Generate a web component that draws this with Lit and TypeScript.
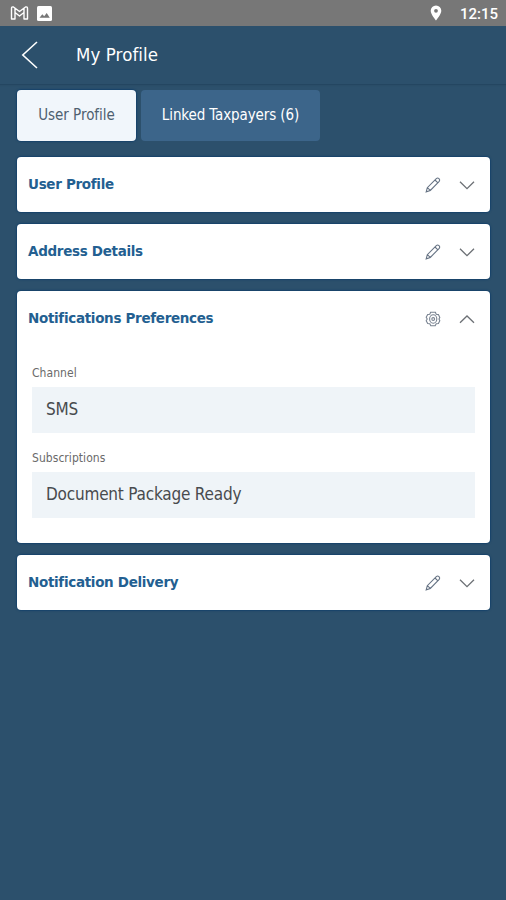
import { LitElement, html, svg, css } from "lit";
import { customElement, property } from "lit/decorators.js";

const pencil = svg`<path d="M2.2 15.8 L3.3 11.7 L12.3 2.6 Q13.6 1.5 15 2.6 Q16.3 4 15.2 5.4 L6.3 14.4 Z M3.3 11.7 L6.3 14.4 M11 4 L13.9 6.8"/>`;
const gear = svg`<path d="M6.6 2.2 H11.4 L12.2 4.2 L14.4 4.6 L15.8 7.4 L15 9 L15.8 10.8 L14.4 13.5 L12.2 13.8 L11.2 15.8 H6.8 L5.8 13.8 L3.7 13.5 L2.2 10.8 L3.2 9 L2.2 7.2 L3.7 4.5 L5.8 4.2 Z"/><ellipse cx="9.2" cy="9" rx="3.6" ry="4.2"/><circle cx="9.2" cy="9" r="1.4"/>`;

@customElement("profile-card")
export class ProfileCard extends LitElement {
  @property() heading = "";
  @property() action = "edit";
  @property({ type: Boolean }) open = false;

  static styles = css`
    :host { display: block; background: #fff; border-radius: 4px; box-shadow: 0 0 1.5px 1px #16426a; }
    .head { height: 55px; display: flex; align-items: center; padding: 0 15px 0 11px; box-sizing: border-box; }
    .title { flex: 1; color: #235f91; font: bold 13.5px/20px "DejaVu Sans", sans-serif; letter-spacing: -0.32px; white-space: nowrap; padding-bottom: 1px; }
    svg { fill: none; stroke: #667384; display: block; }
    .action { width: 18px; height: 18px; stroke-width: 1.1; margin-right: 17px; }
    .settings { stroke: #788290; stroke-width: 1.1; }
    .chevron { width: 16px; height: 10px; stroke: #6c7075; stroke-width: 1.3; }
    .body { padding: 19px 15px 25px; }
  `;

  render() {
    return html`
      <div class="head">
        <div class="title">${this.heading}</div>
        <svg class="action ${this.action}" viewBox="0 0 18 18">${this.action === "settings" ? gear : pencil}</svg>
        <svg class="chevron" viewBox="0 0 16 10">
          ${this.open ? svg`<path d="M1 8.7 L8 2 L15 8.7"/>` : svg`<path d="M1 1.8 L8 8.7 L15 1.8"/>`}
        </svg>
      </div>
      ${this.open ? html`<div class="body"><slot></slot></div>` : ""}
    `;
  }
}

@customElement("app-root")
export class AppRoot extends LitElement {
  static styles = css`
    :host { display: block; height: 900px; background: #2c506c; font-family: "DejaVu Sans Condensed", "DejaVu Sans", sans-serif; font-stretch: condensed; overflow: hidden; }
    .status { height: 26px; background: #777; display: flex; align-items: center; padding: 0 8px 0 10px; box-sizing: border-box; color: #fff; }
    .mail { width: 19px; height: 16px; margin-right: 8px; }
    .image { width: 15px; height: 15px; margin-right: auto; }
    .pin { width: 12px; height: 16px; margin-right: 18px; }
    .time { font: 500 15px/26px Roboto, sans-serif; padding-top: 1px; }
    .bar { height: 59px; box-sizing: border-box; border-bottom: 1px solid #244661; display: flex; align-items: center; padding-left: 21px; color: #fff; box-shadow: 0 1px 1px #27496480; }
    .back { width: 18px; height: 30px; margin-right: 37px; fill: none; stroke: #fff; stroke-width: 1.6; }
    .name { font-size: 18.5px; line-height: 24px; letter-spacing: 0.1px; padding-bottom: 1px; }
    .tabs { display: flex; gap: 5px; padding: 5px 17px 0; }
    .tab { height: 51px; border-radius: 4px; display: flex; align-items: center; justify-content: center; box-sizing: border-box; padding-bottom: 2px; font-size: 15px; white-space: nowrap; letter-spacing: -0.1px; color: #fff; background: #3c658a; width: 179px; }
    .tab.on { width: 119px; background: #f1f6fb; color: #4e6070; box-shadow: 0 0 1.5px 1px #16426a; letter-spacing: -0.02px; }
    .cards { display: grid; gap: 12px; padding: 16px 16px 0 17px; }
    .label { font-size: 12px; line-height: 16px; color: #6a6a6a; letter-spacing: 0.05px; }
    .value { height: 46px; margin: 6px 0 17px; padding-left: 14px; background: #eff4f8; font-size: 17px; line-height: 44px; color: #484b4e; letter-spacing: -0.2px; }
    .value.last { margin-bottom: 0; }
  `;

  render() {
    return html`
      <div class="status">
        <svg class="mail" viewBox="0 0 19 16" fill="none" stroke="#fff" stroke-width="1.4" stroke-linejoin="round">
          <path d="M1.5 14 V3.5 Q1.5 1.5 3.5 2 L9.5 6.5 L15.5 2 Q17.5 1.5 17.5 3.5 V14 H14 V7.5 L9.5 11 L5 7.5 V14 Z M5 7.5 V3.2 M14 7.5 V3.2"/>
        </svg>
        <svg class="image" viewBox="0 0 15 15">
          <rect width="15" height="15" rx="1.5" fill="#fff"/>
          <path d="M2.5 11.8 L5.3 8.2 L7.2 10.3 L9.7 7 L12.8 11.8 Z" fill="#777"/>
        </svg>
        <svg class="pin" viewBox="0 0 12 16">
          <path fill="#fff" fill-rule="evenodd" d="M6 .5 A5.3 5.3 0 0 0 .7 5.8 C.7 9.5 6 15.5 6 15.5 S11.3 9.5 11.3 5.8 A5.3 5.3 0 0 0 6 .5 Z M6 3.9 a1.9 1.9 0 1 1 0 3.8 a1.9 1.9 0 0 1 0 -3.8 Z"/>
        </svg>
        <div class="time">12:15</div>
      </div>
      <div class="bar">
        <svg class="back" viewBox="0 0 18 30"><path d="M16 2 L1.8 15 L16 28"/></svg>
        <div class="name">My Profile</div>
      </div>
      <div class="tabs">
        <div class="tab on">User Profile</div>
        <div class="tab">Linked Taxpayers (6)</div>
      </div>
      <div class="cards">
        <profile-card heading="User Profile"></profile-card>
        <profile-card heading="Address Details"></profile-card>
        <profile-card heading="Notifications Preferences" action="settings" open>
          <div class="label">Channel</div>
          <div class="value">SMS</div>
          <div class="label">Subscriptions</div>
          <div class="value last">Document Package Ready</div>
        </profile-card>
        <profile-card heading="Notification Delivery"></profile-card>
      </div>
    `;
  }
}
